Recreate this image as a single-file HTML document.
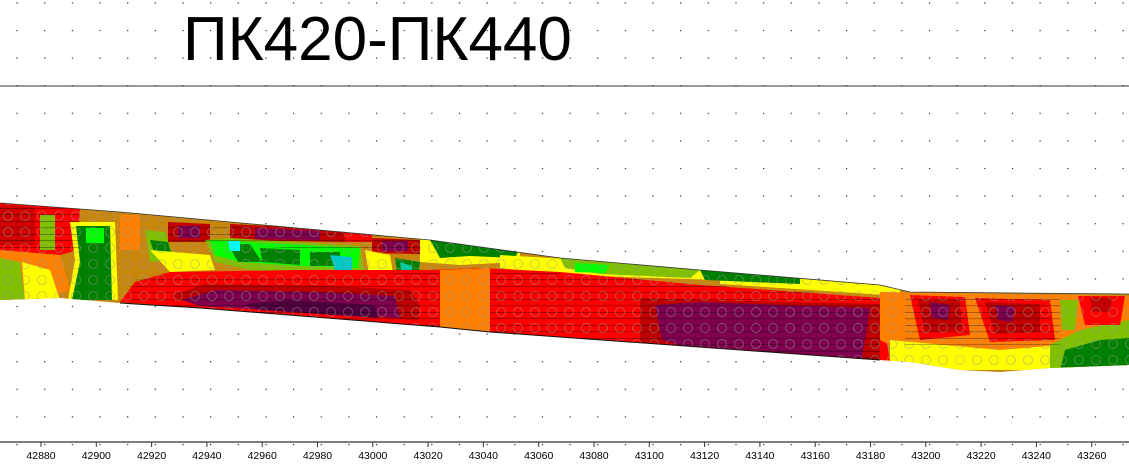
<!DOCTYPE html>
<html><head><meta charset="utf-8"><style>
html,body{margin:0;padding:0;background:#fff;}
svg{display:block}
</style></head><body>
<svg width="1129" height="465" viewBox="0 0 1129 465" xmlns="http://www.w3.org/2000/svg">
<defs>
<pattern id="dots" x="16.5" y="57.5" width="27.65" height="27.6" patternUnits="userSpaceOnUse">
<rect width="1.2" height="1.2" fill="#222"/>
</pattern>
<pattern id="hl" x="0" y="0" width="10" height="6.5" patternUnits="userSpaceOnUse">
<rect y="0" width="10" height="0.6" fill="#000"/>
</pattern>
<pattern id="circ" x="0" y="0" width="17" height="16" patternUnits="userSpaceOnUse">
<circle cx="8" cy="8" r="4.5" fill="none" stroke="#999" stroke-width="0.8" opacity="0.6"/>
</pattern>
<clipPath id="band"><path d="M0,203 L120,212 L230,222 L430,240 L560,258 L700,270 L880,285 L910,292 L1129,294 L1129,365 L1050,368 L1000,372 L960,370 L910,362 L880,360 L490,332 L440,327 L200,308 L120,303 L60,298 L0,300 Z"/></clipPath>
</defs>
<rect width="1129" height="465" fill="#fff"/>
<rect width="1129" height="465" fill="url(#dots)"/>
<line x1="0" y1="86" x2="1129" y2="86" stroke="#333" stroke-width="1"/>
<text x="183" y="60" font-family="Liberation Sans, sans-serif" font-size="62" fill="#000">ПК420-ПК440</text>

<g clip-path="url(#band)">
<rect x="0" y="190" width="1129" height="200" fill="#c8860c"/>
<path d="M0,200 L80,205 L78,250 L60,255 L0,250Z" fill="#ff0000"/>
<path d="M0,205 L35,207 L35,245 L0,245Z" fill="#d00000"/>
<path d="M0,250 L60,255 L70,290 L40,300 L0,300Z" fill="#ff8000"/>
<path d="M0,258 L20,262 L25,300 L0,300Z" fill="#80c000"/>
<path d="M22,262 L50,270 L60,300 L25,300Z" fill="#ffff00"/>
<path d="M70,222 L115,222 L118,300 L68,300 L75,260Z" fill="#ffff00"/>
<path d="M76,226 L110,226 L112,300 L72,300 L80,262Z" fill="#008000"/>
<path d="M86,228 L104,228 L104,243 L86,243Z" fill="#00ff00"/>
<path d="M120,215 L140,215 L140,250 L120,250Z" fill="#ff8000"/>
<path d="M40,215 L55,215 L55,250 L40,250Z" fill="#80c000"/>
<path d="M145,230 L165,232 L175,260 L150,262Z" fill="#80c000"/>
<path d="M150,240 L168,242 L172,255 L155,255Z" fill="#008000"/>
<path d="M168,222 L210,224 L210,242 L168,242Z" fill="#c00000"/>
<path d="M178,226 L200,226 L200,238 L178,238Z" fill="#800050"/>
<path d="M230,224 L345,230 L345,242 L230,240Z" fill="#c00000"/>
<path d="M255,228 L320,231 L320,240 L255,239Z" fill="#800050"/>
<path d="M345,232 L372,233 L372,242 L345,242Z" fill="#ff0000"/>
<path d="M372,238 L420,240 L420,254 L372,253Z" fill="#c00000"/>
<path d="M382,241 L408,241 L408,251 L382,251Z" fill="#800050"/>
<path d="M205,240 L230,238 L360,246 L365,275 L300,272 L250,270 L215,262Z" fill="#80c000"/>
<path d="M210,240 L360,248 L358,268 L300,266 L240,262 L215,255Z" fill="#00ff00"/>
<path d="M228,244 L250,244 L262,262 L238,262Z" fill="#008000"/>
<path d="M260,248 L300,250 L300,265 L262,262Z" fill="#008000"/>
<path d="M310,252 L340,252 L340,266 L310,266Z" fill="#008000"/>
<path d="M228,241 L240,241 L240,251 L230,251Z" fill="#00ffff"/>
<path d="M330,255 L352,257 L352,270 L335,270Z" fill="#00c8c8"/>
<path d="M150,250 L210,255 L215,270 L170,272Z" fill="#ffff00"/>
<path d="M395,258 L420,262 L418,282 L398,280Z" fill="#008000"/>
<path d="M400,262 L412,266 L412,276 L402,276Z" fill="#00c8a0"/>
<path d="M365,250 L390,255 L395,285 L370,280Z" fill="#ffff00"/>
<path d="M420,238 L520,250 L520,262 L460,265 L420,262Z" fill="#ffff00"/>
<path d="M430,240 L520,248 L515,258 L470,256 L440,258Z" fill="#008000"/>
<path d="M500,255 L720,268 L720,280 L560,275 L500,268Z" fill="#ffff00"/>
<path d="M560,258 L700,270 L690,278 L600,274 L565,268Z" fill="#80c000"/>
<path d="M575,263 L610,265 L605,273 L575,272Z" fill="#00ff00"/>
<path d="M720,272 L900,286 L900,296 L720,284Z" fill="#ffff00"/>
<path d="M700,270 L800,278 L800,284 L705,280Z" fill="#008000"/>
<path d="M120,302 L135,282 L170,272 L300,270 L430,270 L480,268 L560,272 L700,285 L880,298 L890,362 L490,332 L440,327 L200,308Z" fill="#ff0000"/>
<path d="M170,296 L205,284 L330,286 L410,290 L420,305 L418,320 L200,306Z" fill="#c00000"/>
<path d="M182,300 L215,290 L320,292 L395,296 L400,318 L200,306Z" fill="#800050"/>
<path d="M245,304 L290,300 L375,305 L378,318 L260,310Z" fill="#500040"/>
<path d="M640,298 L700,300 L880,304 L880,360 L640,342Z" fill="#c00000"/>
<path d="M655,305 L700,302 L870,308 L862,358 L680,345 L662,340Z" fill="#800050"/>
<path d="M440,270 L490,268 L490,332 L440,327Z" fill="#ff8000"/>
<path d="M880,292 L1129,296 L1129,335 L1060,355 L900,350 L880,340Z" fill="#ff8000"/>
<path d="M890,340 L1000,350 L1060,345 L1129,335 L1129,370 L890,370Z" fill="#ffff00"/>
<path d="M1050,345 L1080,330 L1129,320 L1129,370 L1050,370Z" fill="#80c000"/>
<path d="M1065,350 L1100,340 L1129,338 L1129,370 L1060,370Z" fill="#008000"/>
<path d="M910,295 L965,297 L970,335 L920,340Z" fill="#ff0000"/>
<path d="M918,300 L960,300 L962,330 L925,332Z" fill="#c00000"/>
<path d="M930,302 L950,305 L948,320 L932,318Z" fill="#800050"/>
<path d="M975,298 L1050,300 L1055,340 L990,342Z" fill="#ff0000"/>
<path d="M985,302 L1040,304 L1040,332 L995,334Z" fill="#c00000"/>
<path d="M995,305 L1015,307 L1012,322 L998,320Z" fill="#800050"/>
<path d="M1078,296 L1125,296 L1120,325 L1085,325Z" fill="#ff0000"/>
<path d="M1090,298 L1112,298 L1110,312 L1092,312Z" fill="#c00000"/>
<path d="M1060,300 L1078,300 L1075,330 L1062,330Z" fill="#80c000"/>
<g opacity="0.55">
<path d="M0,203 L80,205 L78,250 L0,248Z" fill="url(#hl)"/>
<path d="M130,280 L440,272 L440,327 L200,308 L130,302Z" fill="url(#hl)"/>
<path d="M490,268 L880,298 L880,360 L490,332Z" fill="url(#hl)"/>
<path d="M905,294 L1060,296 L1060,345 L905,345Z" fill="url(#hl)"/>
<path d="M168,222 L420,240 L420,254 L168,242Z" fill="url(#hl)"/>
</g>
<rect x="0" y="190" width="1129" height="200" fill="url(#circ)"/>
</g>
<path d="M0,203 L120,212 L230,222 L430,240 L560,258 L700,270 L880,285 L910,292 L1129,294" fill="none" stroke="#333" stroke-width="0.8"/>
<path d="M120,303 L200,308 L440,327 L490,332 L880,360" fill="none" stroke="#111" stroke-width="1"/>

<line x1="0" y1="442" x2="1129" y2="442" stroke="#333" stroke-width="1.2"/>
<g stroke="#333" stroke-width="1">
<line x1="41" y1="442" x2="41" y2="447"/><line x1="96.3" y1="442" x2="96.3" y2="447"/><line x1="151.6" y1="442" x2="151.6" y2="447"/><line x1="206.9" y1="442" x2="206.9" y2="447"/><line x1="262.2" y1="442" x2="262.2" y2="447"/><line x1="317.5" y1="442" x2="317.5" y2="447"/><line x1="372.8" y1="442" x2="372.8" y2="447"/><line x1="428.1" y1="442" x2="428.1" y2="447"/><line x1="483.4" y1="442" x2="483.4" y2="447"/><line x1="538.7" y1="442" x2="538.7" y2="447"/><line x1="594" y1="442" x2="594" y2="447"/><line x1="649.3" y1="442" x2="649.3" y2="447"/><line x1="704.6" y1="442" x2="704.6" y2="447"/><line x1="759.9" y1="442" x2="759.9" y2="447"/><line x1="815.2" y1="442" x2="815.2" y2="447"/><line x1="870.5" y1="442" x2="870.5" y2="447"/><line x1="925.8" y1="442" x2="925.8" y2="447"/><line x1="981.1" y1="442" x2="981.1" y2="447"/><line x1="1036.4" y1="442" x2="1036.4" y2="447"/><line x1="1091.7" y1="442" x2="1091.7" y2="447"/>
</g>
<g font-family="Liberation Sans, sans-serif" font-size="10.5" fill="#000" text-anchor="middle">
<text x="41" y="459">42880</text><text x="96.3" y="459">42900</text><text x="151.6" y="459">42920</text><text x="206.9" y="459">42940</text><text x="262.2" y="459">42960</text><text x="317.5" y="459">42980</text><text x="372.8" y="459">43000</text><text x="428.1" y="459">43020</text><text x="483.4" y="459">43040</text><text x="538.7" y="459">43060</text><text x="594" y="459">43080</text><text x="649.3" y="459">43100</text><text x="704.6" y="459">43120</text><text x="759.9" y="459">43140</text><text x="815.2" y="459">43160</text><text x="870.5" y="459">43180</text><text x="925.8" y="459">43200</text><text x="981.1" y="459">43220</text><text x="1036.4" y="459">43240</text><text x="1091.7" y="459">43260</text>
</g>
</svg>
</body></html>
